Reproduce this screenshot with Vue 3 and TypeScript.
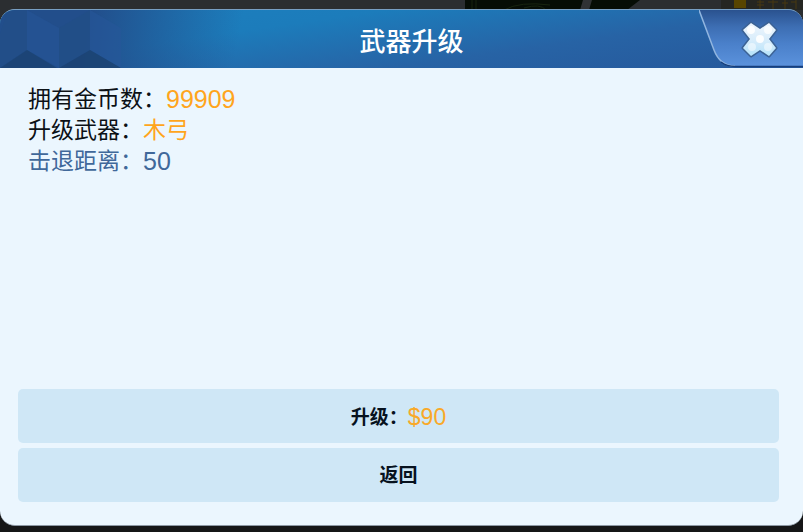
<script setup lang="ts">
import { ref } from 'vue'

interface Stat {
  label: string
  value: string
  kind: 'gold' | 'name' | 'plain'
}

const open = ref(true)
const coins = ref(99909)
const cost = 90

const stats: Stat[] = [
  { label: '拥有金币数：', value: String(coins.value), kind: 'gold' },
  { label: '升级武器：', value: '木弓', kind: 'name' },
  { label: '击退距离：', value: '50', kind: 'plain' },
]

function close(): void {
  open.value = false
}
</script>

<template>
  <main class="scene">
    <svg class="backdrop" viewBox="0 0 803 10" preserveAspectRatio="none" aria-hidden="true">
      <rect width="803" height="10" fill="#2b2e31" />
      <path d="M465 0H640L627 10H465Z" fill="#060d05" />
      <path d="M583 0H592L589 10H580Z" fill="#303234" />
      <path d="M504 10Q520 1 550 5M472 0V10M476 0V10M524 8Q540 3 546 10" fill="none" stroke="#17240f" />
      <rect x="721" width="82" height="10" fill="#252622" />
      <path d="M734 0H746V8H734Z" fill="#584500" />
      <path d="M757 2H764M757 5H764M760 0V9M768 2H778M773 0V9M782 3H788M785 0V9M791 2H796M796 0V9" stroke="#493811" />
    </svg>
    <section v-if="open" class="dialog" role="dialog" aria-labelledby="dialog-title">
      <header class="header">
        <svg class="facets" viewBox="0 0 124 58" aria-hidden="true">
          <path d="M0 24V58L27 40V0H8Z" fill="#214d85" opacity=".5" />
          <path d="M27 0L59 18V58L27 40Z" fill="#26569a" opacity=".5" />
          <path d="M59 18L90 0V40L59 58Z" fill="#214e86" opacity=".6" />
          <path d="M90 0L121 18V58L90 40Z" fill="#26579a" opacity=".6" />
          <path d="M0 58L27 40L57 58ZM59 58L90 40L121 58Z" fill="#1b4372" opacity=".85" />
        </svg>
        <h1 id="dialog-title" class="title">武器升级</h1>
        <button class="close" type="button" aria-label="关闭" @click="close">
          <svg class="tab" viewBox="0 0 104 58" aria-hidden="true">
            <defs>
              <linearGradient id="tab-fill" x1="0" y1="0" x2="0" y2="1">
                <stop offset="0" stop-color="#2a528f" />
                <stop offset=".3" stop-color="#3d6eb3" />
                <stop offset=".6" stop-color="#4a80ca" />
                <stop offset="1" stop-color="#5b92dc" />
              </linearGradient>
              <linearGradient id="cross-fill" x1="0" y1="0" x2="0" y2="1">
                <stop offset="0" stop-color="#eef5fd" />
                <stop offset=".5" stop-color="#d9edfb" />
                <stop offset="1" stop-color="#b5e2fa" />
              </linearGradient>
            </defs>
            <path d="M0 0L15 40Q21 56 36 56H104V0Z" fill="url(#tab-fill)" />
            <path d="M0 0L15 40Q21 56 36 56" fill="none" stroke="#91b5df" stroke-width="1.5" />
            <path d="M22 52Q28 56.5 36 56.5H104" fill="none" stroke="#173f7c" stroke-width="1.5" />
            <path d="M52 13L61 19L70 13L77 20L70 29L77 38L70 46L61 40L52 46L44 38L51 29L44 20Z" fill="url(#cross-fill)" stroke="#3c6294" stroke-width="3" stroke-linejoin="round" paint-order="stroke" />
            <g fill="#ffffff">
              <circle cx="52" cy="20" r="4" opacity=".9" />
              <circle cx="69" cy="20" r="4" opacity=".75" />
              <circle cx="61" cy="29" r="4" opacity=".9" />
              <circle cx="53" cy="37" r="4" opacity=".5" />
              <circle cx="69" cy="37" r="4" opacity=".5" />
            </g>
          </svg>
        </button>
      </header>
      <dl class="stats">
        <div v-for="stat in stats" :key="stat.label" class="stat" :class="stat.kind">
          <dt>{{ stat.label }}</dt>
          <dd>{{ stat.value }}</dd>
        </div>
      </dl>
      <div class="actions">
        <button class="action" type="button">升级：<span class="price">${{ cost }}</span></button>
        <button class="action" type="button" @click="close">返回</button>
      </div>
    </section>
  </main>
</template>

<style>
body {
  background: #151617;
}
</style>

<style scoped>
.scene {
  position: relative;
  box-sizing: border-box;
  display: flex;
  min-height: 100vh;
  padding: 9px 0 6px;
  background: linear-gradient(#2b2e31, #2b2e31 50%, #151617 90%);
  font-family: "Liberation Sans", "Noto Sans CJK SC", sans-serif;
}

.backdrop {
  position: absolute;
  top: 0;
  left: 0;
  width: 100%;
  height: 10px;
}

.dialog {
  position: relative;
  display: flex;
  flex: 1;
  flex-direction: column;
  overflow: hidden;
  box-sizing: border-box;
  border-top: 1px solid #779fc4;
  border-bottom: 1px solid #8c98a4;
  border-radius: 15px;
  background: #ebf6fe;
}

.header {
  display: grid;
  grid-template-columns: 124px 1fr 104px;
  align-items: center;
  height: 58px;
  background:
    linear-gradient(100deg, #224e8b 0, #224e8b 90px, #224e8b00 240px),
    linear-gradient(172deg, #1c80bf 0, #1c7cbb 32%, #2763a5 66%, #26589b 100%);
}

.facets {
  width: 124px;
  height: 58px;
}

.title {
  margin: 0;
  padding-top: 6px;
  color: #fff;
  font-size: 26px;
  font-weight: 500;
  line-height: 38px;
  text-align: center;
}

.close {
  width: 104px;
  height: 58px;
  padding: 0;
  border: 0;
  background: none;
  cursor: pointer;
}

.tab {
  display: block;
  width: 100%;
  height: 100%;
}

.stats {
  flex: 1;
  margin: 0;
  padding: 16px 28px;
  color: #0c1116;
  font-size: 23px;
  line-height: 31px;
}

.stat {
  display: flex;
  height: 31px;
}

.stat dd {
  margin: 0;
}

.gold dd,
.name dd {
  color: #ffa51c;
}

.gold dd,
.plain dd {
  font-size: 25px;
}

.plain {
  color: #40689a;
}

.actions {
  display: grid;
  gap: 5px;
  padding: 0 24px 23px 18px;
}

.action {
  height: 54px;
  padding: 2px 0 0;
  border: 0;
  border-radius: 5px;
  background: #cfe7f6;
  color: #07121e;
  font-family: inherit;
  font-size: 19px;
  font-weight: 700;
  line-height: 52px;
  cursor: pointer;
}

.price {
  color: #f9a928;
  font-size: 23px;
  font-weight: 400;
  vertical-align: -1px;
}
</style>
